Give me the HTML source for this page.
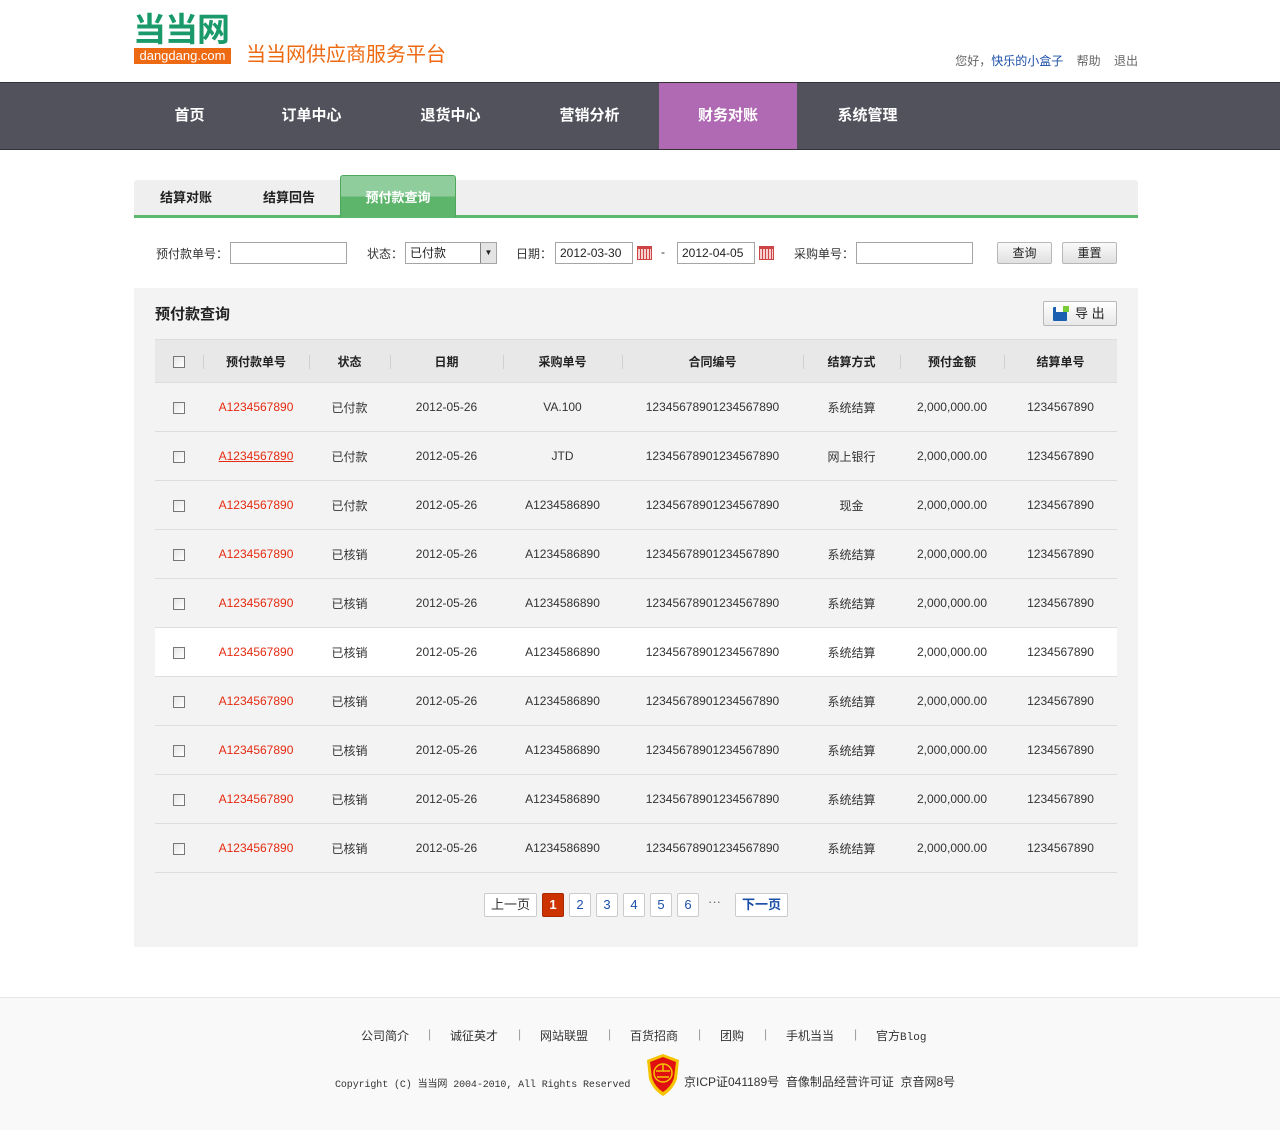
<!DOCTYPE html>
<html><head><meta charset="utf-8"><style>
*{margin:0;padding:0;box-sizing:border-box}
body{width:1280px;height:1130px;background:#fff;font-family:"Liberation Sans","Noto Sans CJK SC",sans-serif;font-size:12px;color:#333;position:relative;overflow:hidden}
.a{position:absolute}
.logo1{left:133px;top:12px;font-size:33px;font-weight:bold;color:#1a9a6a;letter-spacing:-1px;line-height:36px}
.logo2{left:134px;top:48px;width:97px;height:16px;background:#ee6a12;color:#fff;font-size:13px;line-height:16px;text-align:center}
.sub{left:246px;top:43px;font-size:20px;color:#ee6a12;line-height:24px}
.tr{top:52px;right:142px;font-size:12px;color:#666}
.tr b{font-weight:normal;color:#1b4fa8}
.nav{left:0;top:82px;width:1280px;height:68px;background:#52525c;border-top:1px solid #333;border-bottom:1px solid #333}
.ni{position:absolute;top:0;height:66px;line-height:66px;color:#fff;font-size:15px;font-weight:bold;text-align:center;width:139px}
.tabs{left:134px;top:180px;width:1004px;height:35px;background:#efefef;border-radius:3px 3px 0 0}
.gline{left:134px;top:215px;width:1004px;height:3px;background:#5cb86a}
.tab{top:180px;height:35px;line-height:36px;font-size:13px;font-weight:bold;color:#222}
.tabon{left:340px;top:175px;width:116px;height:42px;border:1px solid #4ea85c;border-bottom:none;border-radius:3px 3px 0 0;background:linear-gradient(#90cd9c 0,#90cd9c 50%,#5db56b 50%);color:#fff;font-size:13px;font-weight:bold;text-align:center;line-height:44px}
.lbl{top:245px;font-size:12px;color:#333}
.inp{top:242px;height:22px;border:1px solid #a5a5a5;background:#fff;font-size:12px;line-height:20px;padding-left:4px;color:#222}
.cal{top:246px;width:15px;height:14px;border:1px solid #c44;background:repeating-linear-gradient(90deg,#f7d0d0 0 2px,#c44 2px 3px);border-top:3px solid #c44}
.btn{top:242px;width:55px;height:22px;border:1px solid #b8b8b8;border-radius:2px;background:linear-gradient(#fafafa,#e0e0e0);text-align:center;line-height:20px;font-size:12px;color:#222}
.panel{left:134px;top:288px;width:1004px;height:659px;background:#f3f3f3}
table{position:absolute;left:155px;top:339px;border-collapse:collapse;width:962px;table-layout:fixed}
th{height:43px;background:#e8e8e8;font-size:12px;font-weight:bold;color:#222;border-top:1px solid #ddd;border-bottom:1px solid #ddd;position:relative}
th+th:before{content:"";position:absolute;left:0;top:15px;height:14px;border-left:1px solid #d0d0d0}
td{height:49px;text-align:center;border-bottom:1px solid #ddd;font-size:12px;color:#333}
tr.w td{background:#fff}
.cb{display:inline-block;width:12px;height:12px;border:1px solid #777;background:linear-gradient(135deg,#e6e6e6,#fff);vertical-align:middle}
.r{color:#e52a10}
.u{text-decoration:underline}
.pg{top:893px;height:24px;border:1px solid #ccc;border-radius:2px;background:#fff;text-align:center;line-height:22px;font-size:13px;color:#1b4fa8}
.foot{left:0;top:997px;width:1280px;height:133px;background:#f9f9f9;border-top:1px solid #e6e6e6}
.fl{top:1027px;font-size:12px;color:#333}
</style></head><body>
<div class="a logo1">当当网</div>
<div class="a logo2">dangdang.com</div>
<div class="a sub">当当网供应商服务平台</div>
<div class="a tr">您好，<b>快乐的小盒子</b>&nbsp;&nbsp;&nbsp;&nbsp;帮助&nbsp;&nbsp;&nbsp;&nbsp;退出</div>
<div class="a nav">
<div class="ni" style="left:120px">首页</div>
<div class="ni" style="left:242px">订单中心</div>
<div class="ni" style="left:381px">退货中心</div>
<div class="ni" style="left:520px">营销分析</div>
<div class="ni" style="left:659px;width:138px;background:#b06ab3">财务对账</div>
<div class="ni" style="left:798px">系统管理</div>
</div>
<div class="a tabs"></div>
<div class="a gline"></div>
<div class="a tab" style="left:160px">结算对账</div>
<div class="a tab" style="left:263px">结算回告</div>
<div class="a tabon">预付款查询</div>

<div class="a lbl" style="left:156px">预付款单号：</div>
<div class="a inp" style="left:230px;width:117px"></div>
<div class="a lbl" style="left:367px">状态：</div>
<div class="a inp" style="left:405px;width:92px">已付款<span style="position:absolute;right:0;top:0;width:16px;height:20px;border-left:1px solid #888;background:#e4e4e4;font-size:8px;text-align:center;line-height:20px">▼</span></div>
<div class="a lbl" style="left:516px">日期：</div>
<div class="a inp" style="left:555px;width:78px">2012-03-30</div>
<div class="a cal" style="left:637px"></div>
<div class="a lbl" style="left:661px">-</div>
<div class="a inp" style="left:677px;width:78px">2012-04-05</div>
<div class="a cal" style="left:759px"></div>
<div class="a lbl" style="left:794px">采购单号：</div>
<div class="a inp" style="left:856px;width:117px"></div>
<div class="a btn" style="left:997px">查询</div>
<div class="a btn" style="left:1062px">重置</div>

<div class="a panel"></div>
<div class="a" style="left:155px;top:303px;font-size:15px;font-weight:bold;color:#222">预付款查询</div>
<div class="a" style="left:1043px;top:301px;width:74px;height:25px;border:1px solid #b8b8b8;border-radius:2px;background:linear-gradient(#fff,#e8e8e8);font-size:13px;line-height:23px;color:#222"><span style="position:absolute;left:9px;top:5px;width:14px;height:14px;background:#1b5fb0;border-radius:1px"><span style="position:absolute;left:3px;top:0;width:7px;height:5px;background:#fff"></span><span style="position:absolute;right:-2px;top:-1px;width:6px;height:6px;background:#7c3"></span></span><span style="position:absolute;left:31px">导 出</span></div>

<table>
<colgroup><col style="width:48px"><col style="width:106px"><col style="width:81px"><col style="width:113px"><col style="width:119px"><col style="width:181px"><col style="width:97px"><col style="width:104px"><col style="width:113px"></colgroup>
<tr><th><span class="cb"></span></th><th>预付款单号</th><th>状态</th><th>日期</th><th>采购单号</th><th>合同编号</th><th>结算方式</th><th>预付金额</th><th>结算单号</th></tr>
<tr><td><span class="cb"></span></td><td class="r">A1234567890</td><td>已付款</td><td>2012-05-26</td><td>VA.100</td><td>12345678901234567890</td><td>系统结算</td><td>2,000,000.00</td><td>1234567890</td></tr>
<tr><td><span class="cb"></span></td><td class="r"><span class="u">A1234567890</span></td><td>已付款</td><td>2012-05-26</td><td>JTD</td><td>12345678901234567890</td><td>网上银行</td><td>2,000,000.00</td><td>1234567890</td></tr>
<tr><td><span class="cb"></span></td><td class="r">A1234567890</td><td>已付款</td><td>2012-05-26</td><td>A1234586890</td><td>12345678901234567890</td><td>现金</td><td>2,000,000.00</td><td>1234567890</td></tr>
<tr><td><span class="cb"></span></td><td class="r">A1234567890</td><td>已核销</td><td>2012-05-26</td><td>A1234586890</td><td>12345678901234567890</td><td>系统结算</td><td>2,000,000.00</td><td>1234567890</td></tr>
<tr><td><span class="cb"></span></td><td class="r">A1234567890</td><td>已核销</td><td>2012-05-26</td><td>A1234586890</td><td>12345678901234567890</td><td>系统结算</td><td>2,000,000.00</td><td>1234567890</td></tr>
<tr class="w"><td><span class="cb"></span></td><td class="r">A1234567890</td><td>已核销</td><td>2012-05-26</td><td>A1234586890</td><td>12345678901234567890</td><td>系统结算</td><td>2,000,000.00</td><td>1234567890</td></tr>
<tr><td><span class="cb"></span></td><td class="r">A1234567890</td><td>已核销</td><td>2012-05-26</td><td>A1234586890</td><td>12345678901234567890</td><td>系统结算</td><td>2,000,000.00</td><td>1234567890</td></tr>
<tr><td><span class="cb"></span></td><td class="r">A1234567890</td><td>已核销</td><td>2012-05-26</td><td>A1234586890</td><td>12345678901234567890</td><td>系统结算</td><td>2,000,000.00</td><td>1234567890</td></tr>
<tr><td><span class="cb"></span></td><td class="r">A1234567890</td><td>已核销</td><td>2012-05-26</td><td>A1234586890</td><td>12345678901234567890</td><td>系统结算</td><td>2,000,000.00</td><td>1234567890</td></tr>
<tr><td><span class="cb"></span></td><td class="r">A1234567890</td><td>已核销</td><td>2012-05-26</td><td>A1234586890</td><td>12345678901234567890</td><td>系统结算</td><td>2,000,000.00</td><td>1234567890</td></tr>
</table>

<div class="a pg" style="left:484px;width:53px;color:#333">上一页</div>
<div class="a pg" style="left:542px;width:22px;background:#cc3300;border-color:#a82800;color:#fff;font-weight:bold">1</div>
<div class="a pg" style="left:569px;width:22px">2</div>
<div class="a pg" style="left:596px;width:22px">3</div>
<div class="a pg" style="left:623px;width:22px">4</div>
<div class="a pg" style="left:650px;width:22px">5</div>
<div class="a pg" style="left:677px;width:22px">6</div>
<div class="a" style="left:708px;top:894px;font-size:13px;color:#666">···</div>
<div class="a pg" style="left:735px;width:53px;font-weight:bold">下一页</div>

<div class="a foot"></div>
<div class="a fl" style="left:361px">公司简介</div>
<div class="a fl" style="left:428px;color:#999">|</div>
<div class="a fl" style="left:450px">诚征英才</div>
<div class="a fl" style="left:518px;color:#999">|</div>
<div class="a fl" style="left:540px">网站联盟</div>
<div class="a fl" style="left:608px;color:#999">|</div>
<div class="a fl" style="left:630px">百货招商</div>
<div class="a fl" style="left:698px;color:#999">|</div>
<div class="a fl" style="left:720px">团购</div>
<div class="a fl" style="left:764px;color:#999">|</div>
<div class="a fl" style="left:786px">手机当当</div>
<div class="a fl" style="left:854px;color:#999">|</div>
<div class="a fl" style="left:876px">官方<span style="font-family:'Liberation Mono',monospace;font-size:11px">Blog</span></div>
<div class="a" style="left:335px;top:1075px;font-family:'Liberation Mono','Noto Sans CJK SC',monospace;font-size:10px;letter-spacing:-0.1px;color:#333">Copyright (C) 当当网 2004-2010, All Rights Reserved</div>
<svg class="a" style="left:646px;top:1053px" width="34" height="44" viewBox="0 0 34 44"><path d="M17 1 L33 7 L31 26 Q27 37 17 43 Q7 37 3 26 L1 7 Z" fill="#f5c400"/><path d="M17 4 L30 9 L28 25 Q25 34 17 39 Q9 34 6 25 L4 9 Z" fill="#e01010"/><circle cx="17" cy="20" r="9" fill="none" stroke="#f5c400" stroke-width="1.5"/><path d="M10 18 H24 M17 11 V18 M11 24 H23" stroke="#f5c400" stroke-width="1.5"/></svg>
<div class="a" style="left:684px;top:1073px;font-size:12px;color:#333">京ICP证041189号&nbsp; 音像制品经营许可证&nbsp; 京音网8号</div>
</body></html>
